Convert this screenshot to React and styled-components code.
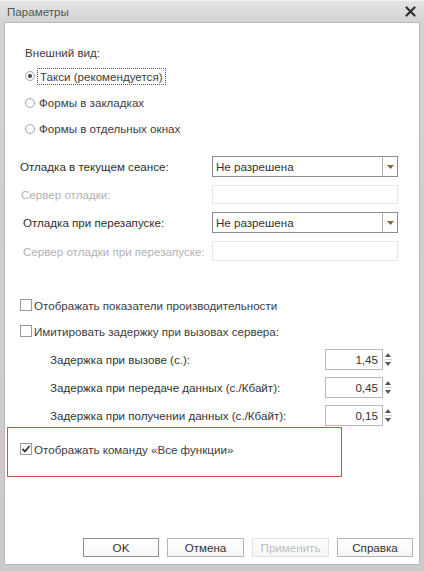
import React from "react";
import styled, { createGlobalStyle } from "styled-components";

const Global = createGlobalStyle`
  html, body { margin: 0; padding: 0; }
  body {
    width: 424px;
    height: 571px;
    overflow: hidden;
    font-family: "Liberation Sans", Arial, sans-serif;
    font-size: 11.6px;
    color: #3d3d3d;
  }
`;

const Window = styled.div`
  width: 424px;
  height: 571px;
  box-sizing: border-box;
  display: flex;
  flex-direction: column;
  background: linear-gradient(#e4e4e4 0px, #d2d2d2 22px, #cacaca 100%);
  border-top: 1px solid #f2f2f2;
`;

const TitleBar = styled.div`
  height: 21px;
  display: flex;
  align-items: center;
  justify-content: space-between;
  padding: 0 8px 0 7px;
  color: #555;
  font-size: 11.6px;
`;

const CloseIcon = () => (
  <svg width="11" height="11" viewBox="0 0 11 11">
    <path d="M1.5 1.5 L9.5 9.5 M9.5 1.5 L1.5 9.5" stroke="#2f2f2f" strokeWidth="2.2" strokeLinecap="round" />
  </svg>
);

const Panel = styled.div`
  flex: 1;
  margin: 0 4px 6px 4px;
  background: #fff;
  border: 1px solid #b9b9b9;
  display: flex;
  flex-direction: column;
  padding-top: 18px;
`;

const Row = styled.div`
  height: ${(p) => p.$h}px;
  display: flex;
  align-items: center;
  padding-left: ${(p) => p.$indent}px;
  margin-top: ${(p) => p.$mt || 0}px;
  flex-shrink: 0;
`;

const Radio = styled.span`
  width: 10px;
  height: 10px;
  box-sizing: border-box;
  border-radius: 50%;
  border: 1px solid #a9a9a9;
  background: radial-gradient(circle, #fff 40%, #ececec 100%);
  margin-right: 4px;
  display: inline-flex;
  align-items: center;
  justify-content: center;
  &::after {
    content: "";
    width: 4px;
    height: 4px;
    border-radius: 50%;
    background: ${(p) => (p.$on ? "#444" : "transparent")};
  }
`;

const FocusLabel = styled.span`
  outline: 1px dotted #555;
  outline-offset: 1px;
  padding: 0 1px;
`;

const FieldGrid = styled.div`
  display: grid;
  grid-template-columns: 1fr 186px;
  grid-template-rows: 21px 19px 21px 20px;
  row-gap: 8px;
  align-items: center;
  padding: 0 21px 0 0;
  margin-top: 15px;
`;

const FieldLabel = styled.div`
  padding-left: ${(p) => p.$indent}px;
  color: ${(p) => (p.$disabled ? "#b3b3b3" : "#2f2f2f")};
  white-space: nowrap;
`;

const Select = styled.div`
  height: 21px;
  box-sizing: border-box;
  border: 1px solid #8c8c8c;
  display: flex;
  align-items: stretch;
  color: #333;
`;

const SelectText = styled.div`
  flex: 1;
  display: flex;
  align-items: center;
  padding-left: 3px;
`;

const SelectButton = styled.div`
  width: 14px;
  border-left: 1px solid #b0b0b0;
  display: flex;
  align-items: center;
  justify-content: center;
`;

const TextInput = styled.div`
  height: 100%;
  box-sizing: border-box;
  border: 1px solid #e6e6e6;
`;

const CheckBox = styled.span`
  width: 12px;
  height: 12px;
  box-sizing: border-box;
  border: 1px solid #9a9a9a;
  background: #fff;
  margin-right: 2px;
  display: inline-flex;
  align-items: center;
  justify-content: center;
`;

const DelayRow = styled.div`
  height: 21px;
  display: flex;
  align-items: center;
  padding-left: 45px;
  padding-right: 26px;
  margin-top: ${(p) => p.$mt}px;
  flex-shrink: 0;
`;

const DelayLabel = styled.div`
  flex: 1;
  color: #333;
`;

const NumberBox = styled.div`
  width: 58px;
  height: 21px;
  box-sizing: border-box;
  border: 1px solid #b8b8b8;
  display: flex;
  align-items: center;
  justify-content: flex-end;
  padding-right: 4px;
  color: #333;
`;

const Spinner = styled.div`
  width: 10px;
  height: 21px;
  display: flex;
  flex-direction: column;
  align-items: center;
  justify-content: center;
  gap: 2px;
`;

const SpinDivider = styled.span`
  width: 7px;
  height: 1px;
  background: #cfcfcf;
`;

const Highlight = styled.div`
  margin: 1px 0 0 2px;
  width: 335px;
  height: 50px;
  box-sizing: border-box;
  border: 1px solid #d94a4a;
  padding: 14px 0 0 12px;
  flex-shrink: 0;
`;

const Line = styled.div`
  display: flex;
  align-items: center;
  height: 14px;
`;

const Spacer = styled.div`
  flex: 1;
`;

const ButtonBar = styled.div`
  display: flex;
  justify-content: flex-end;
  gap: 8px;
  padding: 0 6px 7px 0;
`;

const Button = styled.div`
  width: ${(p) => p.$w || 77}px;
  height: 19px;
  box-sizing: border-box;
  border: 1px solid ${(p) => (p.$default ? "#8f8f8f" : p.$disabled ? "#e2e2e2" : "#b5b5b5")};
  background: linear-gradient(#ffffff, #f6f6f6);
  color: ${(p) => (p.$disabled ? "#bdbdbd" : "#333")};
  display: flex;
  align-items: center;
  justify-content: center;
`;

const Caret = () => (
  <svg width="7" height="4" viewBox="0 0 7 4">
    <path d="M0 0 H7 L3.5 4 Z" fill="#7d6a2a" />
  </svg>
);

const Check = () => (
  <svg width="10" height="10" viewBox="0 0 10 10">
    <path d="M1.5 5 L4 7.5 L8.5 2" fill="none" stroke="#333" strokeWidth="1.8" />
  </svg>
);

const Arrow = ({ up }) => (
  <svg width="6" height="4" viewBox="0 0 6 4">
    <path d={up ? "M0 4 H6 L3 0 Z" : "M0 0 H6 L3 4 Z"} fill="#555" />
  </svg>
);

const SelectField = ({ value }) => (
  <Select>
    <SelectText>{value}</SelectText>
    <SelectButton>
      <Caret />
    </SelectButton>
  </Select>
);

const Delay = ({ label, value, mt }) => (
  <DelayRow $mt={mt}>
    <DelayLabel>{label}</DelayLabel>
    <NumberBox>{value}</NumberBox>
    <Spinner>
      <Arrow up />
      <SpinDivider />
      <Arrow />
    </Spinner>
  </DelayRow>
);

export default function App() {
  return (
    <>
      <Global />
      <Window>
        <TitleBar>
          <span>Параметры</span>
          <CloseIcon />
        </TitleBar>
        <Panel>
          <Row $h={22} $indent={20}>Внешний вид:</Row>
          <Row $h={26} $indent={20}>
            <Radio $on />
            <FocusLabel>Такси (рекомендуется)</FocusLabel>
          </Row>
          <Row $h={27} $indent={20}>
            <Radio />
            Формы в закладках
          </Row>
          <Row $h={25} $indent={20}>
            <Radio />
            Формы в отдельных окнах
          </Row>

          <FieldGrid>
            <FieldLabel $indent={15}>Отладка в текущем сеансе:</FieldLabel>
            <SelectField value="Не разрешена" />
            <FieldLabel $indent={16} $disabled>Сервер отладки:</FieldLabel>
            <TextInput />
            <FieldLabel $indent={18}>Отладка при перезапуске:</FieldLabel>
            <SelectField value="Не разрешена" />
            <FieldLabel $indent={18} $disabled>Сервер отладки при перезапуске:</FieldLabel>
            <TextInput />
          </FieldGrid>

          <Row $h={26} $indent={15} $mt={31}>
            <CheckBox />
            Отображать показатели производительности
          </Row>
          <Row $h={26} $indent={15}>
            <CheckBox />
            Имитировать задержку при вызовах сервера:
          </Row>
          <Delay label="Задержка при вызове (с.):" value="1,45" mt={5} />
          <Delay label="Задержка при передаче данных (с./Кбайт):" value="0,45" mt={7} />
          <Delay label="Задержка при получении данных (с./Кбайт):" value="0,15" mt={7} />

          <Highlight>
            <Line>
              <CheckBox>
                <Check />
              </CheckBox>
              Отображать команду «Все функции»
            </Line>
          </Highlight>

          <Spacer />
          <ButtonBar>
            <Button $default $w={76}>OK</Button>
            <Button>Отмена</Button>
            <Button $disabled>Применить</Button>
            <Button $w={76}>Справка</Button>
          </ButtonBar>
        </Panel>
      </Window>
    </>
  );
}
